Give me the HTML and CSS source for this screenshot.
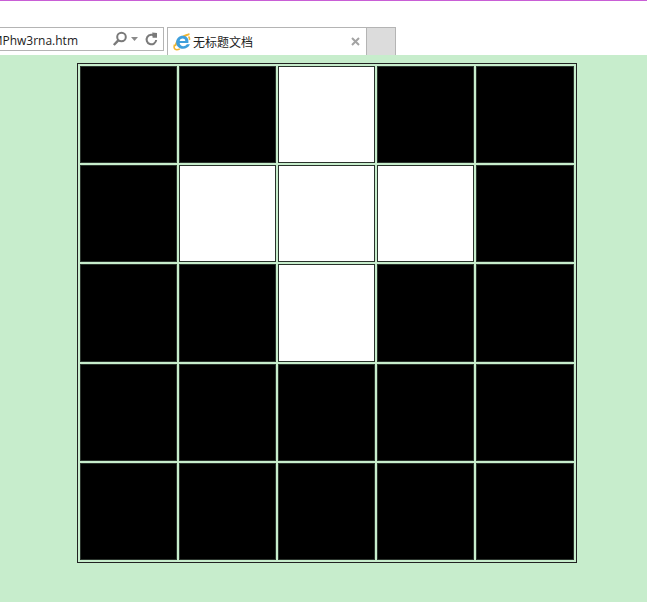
FILE: index.html
```html
<!DOCTYPE html>
<html lang="zh">
<head>
<meta charset="utf-8">
<title>无标题文档</title>
<link rel="stylesheet" href="styles.css">
</head>
<body>
<header class="chrome">
  <div class="address">
    <div class="url"><span class="url-text">MPhw3rna.htm</span></div>
    <svg class="icon-search" width="16" height="16" viewBox="0 0 16 16"><circle cx="9.500" cy="6" r="4.300" fill="none" stroke="#7a7a7a" stroke-width="2"/><path d="M6.300 9.300 1.800 14" stroke="#7a7a7a" stroke-width="2.400" fill="none"/></svg>
    <svg class="icon-drop" width="7" height="4" viewBox="0 0 7 4"><path d="M0 0h7L3.500 4z" fill="#8a8a8a"/></svg>
    <svg class="icon-refresh" width="13" height="14" viewBox="0 0 13 14"><path d="M9.900 4.200A4.800 4.800 0 1 0 11.200 8" fill="none" stroke="#7a7a7a" stroke-width="2"/><path d="M7.200 0.600 12 1v4.800H7.600z" fill="#7a7a7a"/></svg>
  </div>
  <div class="tab">
    <svg class="icon-ie" width="18" height="18" viewBox="0 0 17 17"><path d="M2.200 12.500C3 7 8.500 2 15.500 1.200 13 2 12 2.600 10.800 3.600" fill="none" stroke="#f2b632" stroke-width="1.500"/><path d="M14.700 3.200C15.800 4.600 15.600 6 15.400 6.500M1.500 11c-1.500 4 1 6 5 4" fill="none" stroke="#f2b632" stroke-width="1.500"/><path d="M14.500 9.500H6.300c.2 3.400 5 4 6.800 1.200h2.900C14 16.500 3.800 16.500 3 9.500 2.500 3.500 9 1 12.800 3.800c1.800 1.400 2 3.700 1.700 5.700zM6.300 7.500h5.300C11.500 4.500 6.700 4.500 6.300 7.500z" fill="#3f9fdc"/></svg>
    <span class="tab-title">无标题文档</span>
    <svg class="icon-close" width="9" height="9" viewBox="0 0 9 9"><path d="M1 1l7 7M8 1 1 8" stroke="#a3a3a3" stroke-width="2"/></svg>
  </div>
  <div class="new-tab"></div>
</header>
<main class="content">
  <table class="board">
    <tr><td></td><td></td><td class="on"></td><td></td><td></td></tr>
    <tr><td></td><td class="on"></td><td class="on"></td><td class="on"></td><td></td></tr>
    <tr><td></td><td></td><td class="on"></td><td></td><td></td></tr>
    <tr><td></td><td></td><td></td><td></td><td></td></tr>
    <tr><td></td><td></td><td></td><td></td><td></td></tr>
  </table>
</main>
</body>
</html>
```
FILE: styles.css
```css
html, body {
  margin: 0;
  padding: 0;
}
body {
  background: #c7edcc;
  height: 602px;
  overflow: hidden;
}
.chrome {
  display: flex;
  align-items: flex-start;
  box-sizing: border-box;
  height: 55px;
  padding-top: 26px;
  background: #fff;
  border-top: 1px solid #c95fd6;
  font-family: "Open Sans", "Noto Sans CJK SC", sans-serif;
  color: #222;
}
.address {
  display: flex;
  align-items: center;
  box-sizing: border-box;
  width: 164px;
  height: 24px;
  border: 1px solid #b4b4b4;
  border-left: 0;
}
.url {
  width: 112px;
  flex: none;
  overflow: hidden;
  white-space: nowrap;
  display: flex;
  justify-content: flex-end;
  padding-right: 34px;
  padding-top: 2px;
  box-sizing: border-box;
  font-size: 12px;
}
.url-text {
  flex: none;
}
.icon-search {
  flex: none;
}
.icon-drop {
  flex: none;
  margin-left: 3px;
}
.icon-refresh {
  flex: none;
  margin-left: 7px;
}
.tab {
  display: flex;
  align-items: center;
  box-sizing: border-box;
  width: 200px;
  height: 28px;
  margin-left: 3px;
  padding: 0 6px 0 5px;
  border: 1px solid #b4b4b4;
  border-bottom: 0;
}
.tab-title {
  margin-left: 2px;
  font-size: 12px;
  font-family: "Noto Sans CJK SC", sans-serif;
  flex: 1;
}
.new-tab {
  box-sizing: border-box;
  width: 29px;
  height: 28px;
  background: #dcdcdc;
  border: 1px solid #b4b4b4;
  border-left: 0;
  border-bottom: 0;
}
.content {
  padding: 8px 0 0 77px;
}
.board {
  width: 500px;
  height: 500px;
  table-layout: fixed;
  border: 1px solid #222;
  border-collapse: separate;
  border-spacing: 2px;
}
.board td {
  box-sizing: border-box;
  width: 97px;
  padding: 0;
  background: #000;
  border: 1px solid #2a332c;
}
.board td:last-child {
  width: 98px;
}
.board td.on {
  background: #fff;
}
```
